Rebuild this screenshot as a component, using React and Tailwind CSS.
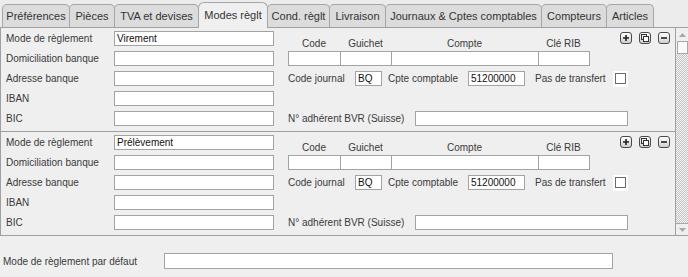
import React from "react";

const tabs = [
  { label: "Préférences", w: "w-[68px]" },
  { label: "Pièces", w: "w-[46px]" },
  { label: "TVA et devises", w: "w-[85px]" },
  { label: "Modes règlt", w: "w-[70px]", active: true },
  { label: "Cond. règlt", w: "w-[63px]" },
  { label: "Livraison", w: "w-[57px]" },
  { label: "Journaux & Cptes comptables", w: "w-[157px]" },
  { label: "Compteurs", w: "w-[66px]" },
  { label: "Articles", w: "w-[48px]" },
];

function Field({ value = "", className = "" }) {
  return (
    <div
      className={`h-[15px] bg-white border border-[#a3a3a3] pl-[2px] text-[10px] leading-[13px] text-[#111] ${className}`}
    >
      {value}
    </div>
  );
}

function IconButton({ children }) {
  return (
    <div className="w-[12px] h-[12px] rounded-[3px] border border-[#4a4a4a] bg-gradient-to-b from-white to-[#d0d0d0] flex items-center justify-center">
      {children}
    </div>
  );
}

function Block({ mode }) {
  const left = [
    ["Mode de règlement", mode],
    ["Domiciliation banque", ""],
    ["Adresse banque", ""],
    ["IBAN", ""],
    ["BIC", ""],
  ];

  const right = [
    <div className="flex items-start" key="r1">
      <div className="w-[52px] text-center pt-[5px] leading-[15px]">Code</div>
      <div className="w-[51px] text-center pt-[5px] leading-[15px]">Guichet</div>
      <div className="w-[147px] text-center pt-[5px] leading-[15px]">Compte</div>
      <div className="w-[51px] text-center pt-[5px] leading-[15px]">Clé RIB</div>
      <div className="ml-[31px] mt-[1px] flex gap-[7px]">
        <IconButton>
          <svg width="8" height="8" viewBox="0 0 8 8">
            <path d="M4 1v6M1 4h6" stroke="#222" strokeWidth="1.6" />
          </svg>
        </IconButton>
        <IconButton>
          <svg width="10" height="10" viewBox="0 0 10 10">
            <rect x="1.5" y="1.5" width="5" height="5" fill="none" stroke="#333" />
            <rect x="3.5" y="3.5" width="5" height="5" fill="#fff" stroke="#333" />
          </svg>
        </IconButton>
        <IconButton>
          <svg width="8" height="8" viewBox="0 0 8 8">
            <path d="M1 4h6" stroke="#222" strokeWidth="1.6" />
          </svg>
        </IconButton>
      </div>
    </div>,
    <div className="flex" key="r2">
      <Field className="w-[53px]" />
      <Field className="w-[52px] -ml-px" />
      <Field className="w-[148px] -ml-px" />
      <Field className="w-[52px] -ml-px" />
    </div>,
    <div className="flex items-center h-[15px]" key="r3">
      <span className="w-[67px]">Code journal</span>
      <Field className="w-[27px]" value="BQ" />
      <span className="ml-[6px] w-[80px]">Cpte comptable</span>
      <Field className="w-[57px]" value="51200000" />
      <span className="ml-[10px] w-[78px]">Pas de transfert</span>
      <div className="w-[15px] h-[16px] bg-white flex items-center justify-center">
        <div className="w-[11px] h-[11px] border border-[#6a6a6a] bg-white" />
      </div>
    </div>,
    <div key="r4" />,
    <div className="flex items-center h-[15px]" key="r5">
      <span className="w-[127px]">N° adhérent BVR (Suisse)</span>
      <Field className="w-[213px]" />
    </div>,
  ];

  return (
    <div className="pt-[3px] pb-[5px] border-b border-[#a0a0a0] flex flex-col gap-[5px]">
      {left.map(([label, value], i) => (
        <div className="flex h-[15px] items-start" key={label}>
          <div className="w-[113px] pl-[5px] h-[15px] flex items-center shrink-0">{label}</div>
          <Field className="w-[160px] shrink-0" value={value} />
          <div className="ml-[14px]">{right[i]}</div>
        </div>
      ))}
    </div>
  );
}

export default function App() {
  return (
    <div
      className="w-[688px] h-[277px] bg-[#ececec] text-[10px] text-[#3a3a3a] overflow-hidden"
      style={{ fontFamily: '"Liberation Sans", Arial, sans-serif' }}
    >
      <div className="h-[28px] flex items-end pl-[2px] border-b border-[#a0a0a0]">
        {tabs.map((t, i) => (
          <div
            key={t.label}
            className={`${t.w} ${i > 0 ? "-ml-px" : ""} ${
              t.active
                ? "h-[26px] -mb-px bg-[#efefef] z-10 rounded-t-[6px]"
                : "h-[23px] bg-[#dcdcdc] rounded-t-[5px]"
            } border border-b-0 border-[#a6a6a6] flex items-center justify-center text-[11px] text-[#333] relative`}
          >
            {t.label}
          </div>
        ))}
      </div>

      <div className="flex bg-[#efefef] border-l border-[#a0a0a0]">
        <div className="flex-1">
          <Block mode="Virement" />
          <Block mode="Prélèvement" />
        </div>
        <div className="w-[13px] border-l border-[#a0a0a0] border-b flex flex-col">
          <div className="h-[13px] flex items-center justify-center">
            <svg width="7" height="4" viewBox="0 0 7 4">
              <path d="M0 4L3.5 0L7 4Z" fill="#a8a8a8" />
            </svg>
          </div>
          <div className="h-[13px] bg-[#fafafa] border border-[#a8a8a8] ml-px" />
          <div className="flex-1 bg-[repeating-conic-gradient(#c4c4c4_0%_25%,#f4f4f4_0%_50%)] bg-[length:2px_2px]" />
          <div className="h-[12px] border-t border-[#a8a8a8] flex items-center justify-center">
            <svg width="7" height="4" viewBox="0 0 7 4">
              <path d="M0 0L3.5 4L7 0Z" fill="#a8a8a8" />
            </svg>
          </div>
        </div>
      </div>

      <div className="bg-[#efefef] h-[40px] pt-[17px] flex items-start">
        <div className="w-[164px] pl-[3px] h-[16px] flex items-center">Mode de règlement par défaut</div>
        <Field className="w-[449px] h-[16px]" />
      </div>
    </div>
  );
}
